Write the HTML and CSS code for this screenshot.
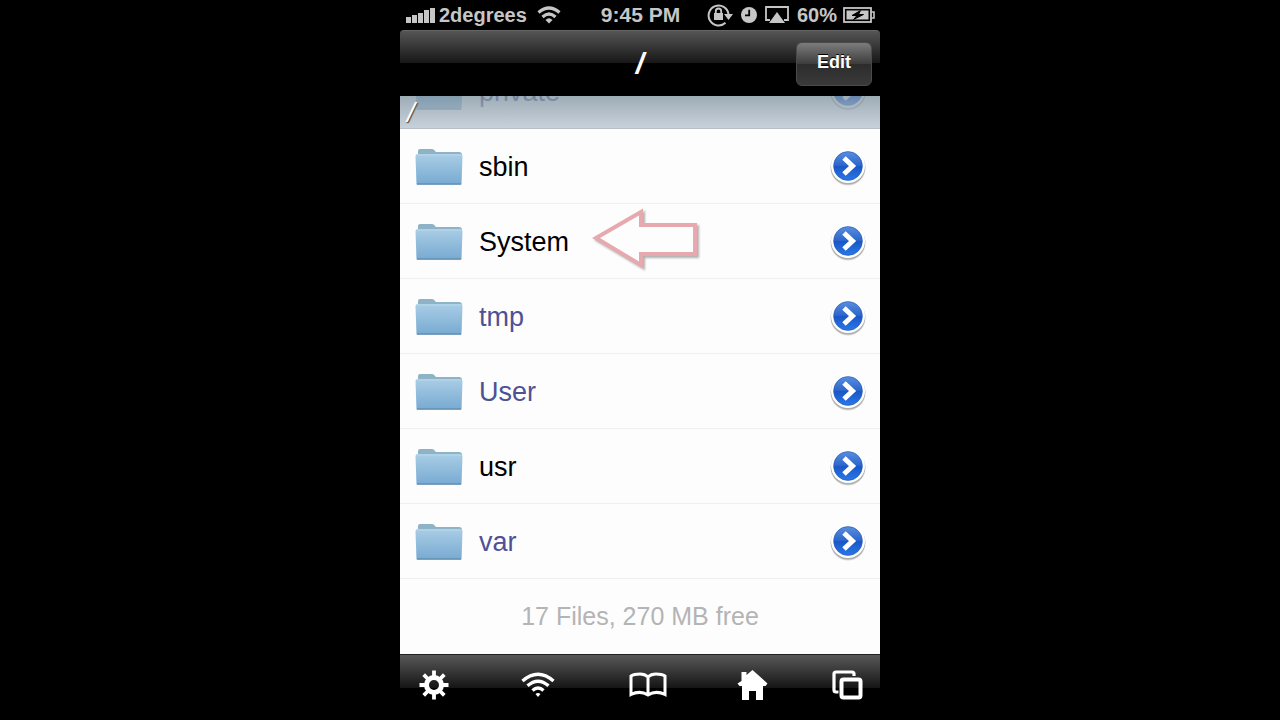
FILE: index.html
```html
<!DOCTYPE html>
<html lang="en">
  <head>
    <meta charset="UTF-8" />
    <meta name="viewport" content="width=device-width, initial-scale=1.0" />
    <title>/</title>
    <link rel="stylesheet" href="styles.css">
  </head>
  <body>
    <!-- Shared icons -->
    <svg class="icon-defs" aria-hidden="true">
      <defs>
        <linearGradient id="folderFront" x1="0" y1="0" x2="0" y2="1">
          <stop offset="0" stop-color="#a9cde5" />
          <stop offset="1" stop-color="#78aad2" />
        </linearGradient>
        <linearGradient id="blueDisc" x1="0" y1="0" x2="0" y2="1">
          <stop offset="0" stop-color="#5b8ede" />
          <stop offset="0.48" stop-color="#2c66cc" />
          <stop offset="0.52" stop-color="#1a57c6" />
          <stop offset="1" stop-color="#2a78ea" />
        </linearGradient>
      </defs>
      <symbol id="folder" viewBox="0 0 48 38">
        <path d="M3 6V3Q3 1 5 1H17Q19 1 20 3L21 4H44Q47 4 47 7V12H3Z" fill="#8fb3c6" />
        <path d="M0.500 8Q0.500 6 3 6H45Q47.500 6 47.500 8L46.500 36.500H1.500Z" fill="url(#folderFront)" />
        <path d="M2 7H46" stroke="#b9d8e9" stroke-width="1" />
        <path d="M2 36H46" stroke="#6591b2" stroke-width="1.5" />
      </symbol>
      <symbol id="disclosure" viewBox="0 0 36 38">
        <circle cx="18" cy="20" r="17.500" fill="#000" opacity="0.14" />
        <circle cx="18" cy="19.2" r="17.300" fill="#000" opacity="0.2" />
        <circle cx="18" cy="18" r="17" fill="#fff" />
        <circle cx="18" cy="18" r="14.4" fill="url(#blueDisc)" stroke="#2458b0" stroke-width="0.6" />
        <path d="M14 10L22.5 18L14 26" fill="none" stroke="#fff" stroke-width="5" />
      </symbol>
    </svg>

    <div class="phone">
      <div class="status-bar">
        <div class="status-left">
          <svg class="signal" viewBox="0 0 29 16">
            <path d="M0 10H5V16H0ZM6 8H11V16H6ZM12 6H17V16H12ZM18 3H23V16H18ZM24 1H29V16H24Z" fill="#c6c6c6" />
          </svg>
          <span class="carrier">2degrees</span>
          <svg class="status-wifi" viewBox="0 0 24 18">
            <g fill="none" stroke="#c6c6c6" stroke-width="3.2">
              <path d="M1.5 6.5Q12 -2.5 22.5 6.5" />
              <path d="M5.5 11Q12 5 18.5 11" />
            </g>
            <path d="M12 17.500L8.500 14Q12 10.500 15.500 14Z" fill="#c6c6c6" />
          </svg>
        </div>
        <span class="time">9:45 PM</span>
        <div class="status-right">
          <svg class="rotation-lock" viewBox="0 0 26 24">
            <path d="M18.5 19.8A10 10 0 1 1 21.5 11" fill="none" stroke="#c6c6c6" stroke-width="2" />
            <path d="M17 11H26L21.5 17Z" fill="#c6c6c6" />
            <rect x="7" y="10" width="9" height="7" fill="#c6c6c6" />
            <path d="M8.8 10V8.2A2.7 2.7 0 0 1 14.2 8.2V10" fill="none" stroke="#c6c6c6" stroke-width="1.8" />
          </svg>
          <svg class="clock" viewBox="0 0 16 16">
            <circle cx="8" cy="8" r="8" fill="#c6c6c6" />
            <path d="M8.2 2.8V8.4H4" fill="none" stroke="#000" stroke-width="1.8" />
          </svg>
          <svg class="airplay" viewBox="0 0 24 18">
            <path d="M5 14H1V1H23V14H19" fill="none" stroke="#c6c6c6" stroke-width="1.8" />
            <path d="M12 6L20 17H4Z" fill="#c6c6c6" />
          </svg>
          <span class="percent">60%</span>
          <svg class="battery" viewBox="0 0 32 16">
            <rect x="1" y="1" width="27" height="14" fill="none" stroke="#c6c6c6" stroke-width="1.8" />
            <rect x="3.5" y="3.5" width="22" height="9" fill="#c6c6c6" />
            <path d="M28 5H31V11H28" fill="none" stroke="#c6c6c6" stroke-width="1.6" />
            <path d="M17.500 3.500L9 8.500H14L10.500 12.500L20.500 7.500H15.500Z" fill="#000" stroke="#000" stroke-width="1" />
          </svg>
        </div>
      </div>

      <header class="navbar">
        <h1 class="title">/</h1>
        <button class="edit" type="button">Edit</button>
      </header>

      <main class="files">
        <h2 class="section-header">/</h2>
        <ul class="file-list">
          <li class="row scrolled">
            <svg class="folder"><use href="#folder" /></svg>
            <a href="#" class="name link">private</a>
            <button class="detail" type="button" aria-label="Details"><svg><use href="#disclosure" /></svg></button>
          </li>
          <li class="row">
            <svg class="folder"><use href="#folder" /></svg>
            <a href="#" class="name">sbin</a>
            <button class="detail" type="button" aria-label="Details"><svg><use href="#disclosure" /></svg></button>
          </li>
          <li class="row">
            <svg class="folder"><use href="#folder" /></svg>
            <a href="#" class="name">System</a>
            <button class="detail" type="button" aria-label="Details"><svg><use href="#disclosure" /></svg></button>
            <svg class="pointer" viewBox="0 0 112 68">
              <path d="M4 34L49 8V21H103V50H49V61Z" fill="#fdfdfd" stroke="#e6a9ae" stroke-width="4" />
            </svg>
          </li>
          <li class="row">
            <svg class="folder"><use href="#folder" /></svg>
            <a href="#" class="name link">tmp</a>
            <button class="detail" type="button" aria-label="Details"><svg><use href="#disclosure" /></svg></button>
          </li>
          <li class="row">
            <svg class="folder"><use href="#folder" /></svg>
            <a href="#" class="name link">User</a>
            <button class="detail" type="button" aria-label="Details"><svg><use href="#disclosure" /></svg></button>
          </li>
          <li class="row">
            <svg class="folder"><use href="#folder" /></svg>
            <a href="#" class="name">usr</a>
            <button class="detail" type="button" aria-label="Details"><svg><use href="#disclosure" /></svg></button>
          </li>
          <li class="row">
            <svg class="folder"><use href="#folder" /></svg>
            <a href="#" class="name link">var</a>
            <button class="detail" type="button" aria-label="Details"><svg><use href="#disclosure" /></svg></button>
          </li>
        </ul>
        <p class="summary">17 Files, 270 MB free</p>
      </main>

      <nav class="toolbar">
        <button class="tool tool-settings" type="button" aria-label="Settings">
          <svg width="30" height="30" viewBox="0 0 30 30">
            <circle cx="15" cy="15" r="7.500" fill="none" stroke="#fff" stroke-width="5" />
            <path d="M15 0.500V6M15 24V29.500M0.500 15H6M24 15H29.500M4.700 4.700L9 9M21 21L25.300 25.300M25.300 4.700L21 9M9 21L4.700 25.300" stroke="#fff" stroke-width="3.800" />
          </svg>
        </button>
        <button class="tool tool-wifi" type="button" aria-label="Wi-Fi">
          <svg width="34" height="26" viewBox="0 0 34 26">
            <g fill="none" stroke="#fff" stroke-width="3.400">
              <path d="M1.500 9Q17 -4.500 32.500 9" />
              <path d="M6.500 13.800Q17 4.500 27.500 13.800" />
              <path d="M11.500 18.500Q17 13.500 22.500 18.500" />
            </g>
            <path d="M17 25L14.500 22Q17 20 19.500 22Z" fill="#fff" />
          </svg>
        </button>
        <button class="tool tool-bookmarks" type="button" aria-label="Bookmarks">
          <svg width="38" height="26" viewBox="0 0 38 26">
            <path d="M19 5Q16 2 11 2Q5 2 2 4V22.500Q11 18 19 23Q27 18 36 22.500V4Q33 2 27 2Q22 2 19 5ZM19 5V23" fill="none" stroke="#fff" stroke-width="3" />
          </svg>
        </button>
        <button class="tool tool-home" type="button" aria-label="Home">
          <svg width="31" height="32" viewBox="0 0 31 32">
            <path d="M4.500 12V3H9.500V6L15.500 1L30.500 14.500L28.500 17H26V31H19V22H12V31H5V17H2.500L0.500 14.500Z" fill="#fff" />
          </svg>
        </button>
        <button class="tool tool-windows" type="button" aria-label="Windows">
          <svg width="31" height="30" viewBox="0 0 31 30">
            <path d="M6.500 22H4Q2 22 2 20V4Q2 2 4 2H20Q22 2 22 4V6" fill="none" stroke="#fff" stroke-width="3.200" />
            <rect x="9.500" y="9.500" width="19" height="18" rx="2" fill="none" stroke="#fff" stroke-width="4" />
          </svg>
        </button>
      </nav>
    </div>
  </body>
</html>
```
FILE: styles.css
```css
* {
  box-sizing: border-box;
}

body {
  font-family: "Liberation Sans", Arial, sans-serif;
  margin: 0;
  padding: 0;
  background-color: #000;
}

h1,
h2,
p,
ul {
  margin: 0;
  padding: 0;
}

button {
  font-family: inherit;
  border: none;
  padding: 0;
  cursor: pointer;
}

svg {
  display: block;
  flex-shrink: 0;
}

.icon-defs {
  position: absolute;
  width: 0;
  height: 0;
}

.phone {
  display: flex;
  flex-direction: column;
  max-width: 480px;
  min-height: 100vh;
  margin: 0 auto;
}

/* Status bar */
.status-bar {
  display: grid;
  grid-template-columns: 1fr auto 1fr;
  align-items: center;
  height: 30px;
  padding: 0 5px 0 6px;
  color: #c6c6c6;
  font-size: 20px;
  font-weight: bold;
}

.status-left,
.status-right {
  display: flex;
  align-items: center;
}

.status-right {
  justify-content: flex-end;
  gap: 8px;
}

.time {
  font-size: 21px;
}

.signal {
  width: 29px;
  height: 16px;
  margin-right: 4px;
}

.status-wifi {
  width: 24px;
  height: 18px;
  margin-left: 10px;
}

.rotation-lock {
  width: 26px;
  height: 24px;
}

.clock {
  width: 16px;
  height: 16px;
}

.airplay {
  width: 24px;
  height: 18px;
}

.battery {
  width: 32px;
  height: 16px;
}

.percent + .battery {
  margin-left: -2px;
}

/* Navigation bar */
.navbar {
  display: grid;
  grid-template-columns: 1fr auto 1fr;
  align-items: center;
  height: 66px;
  padding: 0 8px;
  border-top: 1px solid #666;
  border-radius: 4px 4px 0 0;
  background: linear-gradient(#555, #161616 50%, #000 50%);
}

.title {
  grid-column: 2;
  color: #fff;
  font-size: 30px;
  font-style: italic;
  line-height: 32px;
}

.edit {
  justify-self: end;
  width: 76px;
  height: 44px;
  padding-bottom: 2px;
  border: 1px solid #4a4a4a;
  border-radius: 6px;
  background: linear-gradient(#7c7c7c, #3c3c3c 50%, #2c2c2c 50%, #3a3a3a);
  color: #fff;
  font-size: 18px;
  font-weight: bold;
  text-shadow: 0 -1px 0 #000;
}

/* File list */
.files {
  position: relative;
  flex: 1;
  overflow: hidden;
  background-color: #fdfdfd;
}

/* Stays on top of the row that is scrolled under it */
.section-header {
  position: absolute;
  top: 0;
  left: 0;
  right: 0;
  z-index: 1;
  height: 33px;
  padding-left: 7px;
  border-bottom: 1px solid #b9bfc5;
  background: linear-gradient(rgba(126, 145, 158, 0.75), rgba(191, 202, 213, 0.86));
  color: #fff;
  font-size: 28px;
  font-style: italic;
  font-weight: normal;
  line-height: 34px;
  text-shadow: 1px 1px 1px #444;
}

.file-list {
  list-style: none;
}

.row {
  position: relative;
  display: flex;
  align-items: center;
  height: 75px;
  padding: 2px 14px 0 15px;
  border-bottom: 1px solid #f0f0f0;
}

.row.scrolled {
  margin-top: -42px;
}

.folder {
  width: 48px;
  height: 38px;
}

.name {
  flex: 1;
  margin-left: 16px;
  color: #000;
  font-size: 27px;
  text-decoration: none;
}

.name.link {
  color: #4f5195;
}

.detail {
  background: none;
}

.detail svg {
  width: 36px;
  height: 38px;
}

.pointer {
  position: absolute;
  top: 0;
  left: 40%;
  width: 112px;
  height: 68px;
  filter: drop-shadow(2px 2px 1px rgba(0, 0, 0, 0.3));
}

.summary {
  color: #b4b4b4;
  font-size: 25px;
  line-height: 75px;
  text-align: center;
}

/* Bottom toolbar */
.toolbar {
  display: flex;
  justify-content: space-between;
  align-items: center;
  height: 66px;
  padding: 0 17px 5px 15px;
  border-top: 1px solid #222;
  background: linear-gradient(#585858, #161616 50%, #000 50%);
}

.tool {
  display: flex;
  justify-content: center;
  background: none;
}

.tool-settings {
  width: 38px;
}

.tool-wifi {
  width: 41px;
}

.tool-bookmarks {
  width: 51px;
}

.tool-home,
.tool-windows {
  width: 31px;
}
```
